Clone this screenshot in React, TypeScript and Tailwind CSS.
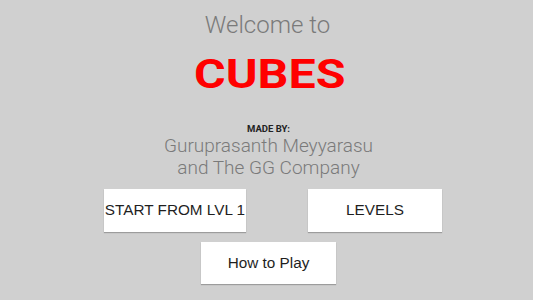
import React from "react";

export default function App() {
  const roboto = { fontFamily: "Roboto, 'Liberation Sans', sans-serif" };
  const arial = { fontFamily: "'Liberation Sans', Arial, sans-serif" };
  const btn =
    "bg-white shadow-[0_1px_1px_rgba(0,0,0,0.25)] text-[15.3px] text-[#1f1f1f] whitespace-nowrap flex items-center justify-center";
  return (
    <div className="w-[533px] h-[300px] bg-[#d0d0d0] flex flex-col items-center overflow-hidden" style={roboto}>
      <div className="mt-[11px] pl-[2px] text-[24px] leading-[28px] font-light text-[#7a7a7a]">Welcome to</div>
      <div className="mt-[13px] pl-[6px] text-[41px] leading-[44px] font-bold text-[#ff0000] scale-x-[1.18]">CUBES</div>
      <div className="mt-[26.5px] pl-[4px] text-[9.5px] leading-[12px] font-bold text-[#222]">MADE BY:</div>
      <div className="pl-[4px] text-[19px] leading-[22px] font-light text-[#7a7a7a] text-center">
        Guruprasanth Meyyarasu
        <br />
        and The GG Company
      </div>
      <div className="mt-[10.5px] w-full pl-[13px] flex justify-center gap-[62px]">
        <button className={`w-[142px] h-[43px] ${btn}`} style={arial}>
          START FROM LVL 1
        </button>
        <button className={`w-[134px] h-[43px] ${btn}`} style={arial}>
          LEVELS
        </button>
      </div>
      <div className="mt-[10px] w-full pl-[4px] flex justify-center">
        <button className={`w-[135px] h-[42px] ${btn}`} style={arial}>
          How to Play
        </button>
      </div>
    </div>
  );
}
